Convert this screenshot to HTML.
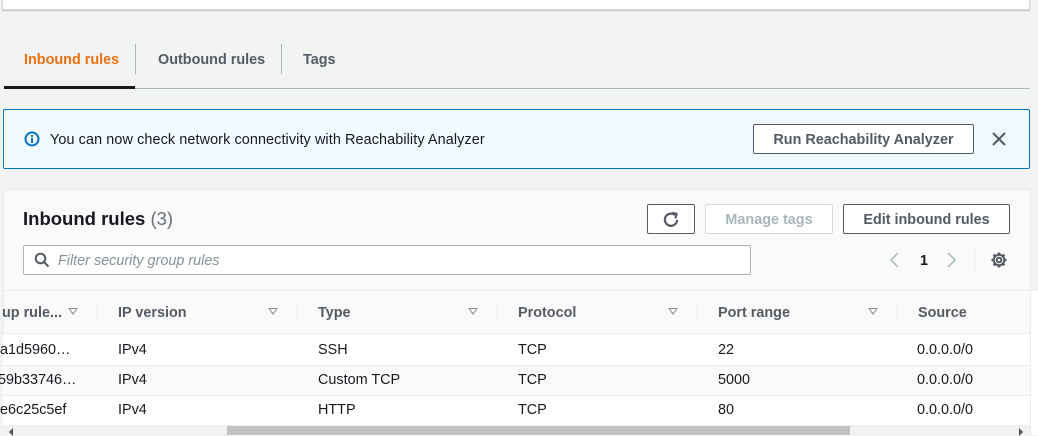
<!DOCTYPE html>
<html><head><style>
*{margin:0;padding:0;box-sizing:border-box}
body{width:1038px;height:435px;overflow:hidden;background:#f2f3f3;font-family:"Liberation Sans",Arial,sans-serif;font-size:14.4px;color:#16191f;position:relative}
.a{position:absolute}
.tab{position:absolute;top:52px;font-weight:bold;font-size:14.4px;color:#545b64}
.btn{position:absolute;border:1px solid #545b64;border-radius:2px;background:#fff;font-weight:bold;color:#545b64;font-size:14.4px;text-align:center}
.th{position:absolute;top:305px;font-weight:bold;color:#545b64}
.tri{position:absolute;top:308px;width:0;height:0;border-left:5px solid transparent;border-right:5px solid transparent;border-top:7px solid #879196}
.tri:after{content:"";position:absolute;left:-3px;top:-6px;border-left:3px solid transparent;border-right:3px solid transparent;border-top:4px solid #fff}
.sep{position:absolute;top:301px;width:1px;height:22px;background:#eaeded}
.td{position:absolute;color:#16191f}
</style></head><body>
<div class="a" style="left:2px;top:0;width:1028px;height:10px;background:#fff;border:1px solid #d5dbdb;border-top:none;box-shadow:0 1px 1px rgba(0,0,0,.2)"></div>

<div class="tab" style="left:24px;color:#ec7211">Inbound rules</div>
<div class="a" style="left:135px;top:44px;width:1px;height:30px;background:#aab7b8"></div>
<div class="tab" style="left:158px">Outbound rules</div>
<div class="a" style="left:281px;top:44px;width:1px;height:30px;background:#aab7b8"></div>
<div class="tab" style="left:303px">Tags</div>
<div class="a" style="left:4px;top:88px;width:1026px;height:1px;background:#aab7b8"></div>
<div class="a" style="left:4px;top:86px;width:131px;height:3px;background:#16191f"></div>

<div class="a" style="left:3px;top:109px;width:1027px;height:60px;background:#f1faff;border:1px solid #0073bb;border-radius:2px"></div>
<svg class="a" style="left:24px;top:131px" width="16" height="16" viewBox="0 0 16 16"><circle cx="8" cy="8" r="6.5" fill="none" stroke="#0073bb" stroke-width="2"/><rect x="7" y="7" width="2" height="5" fill="#0073bb"/><rect x="7" y="4" width="2" height="2" fill="#0073bb"/></svg>
<div class="a" style="left:50px;top:132px;color:#16191f;letter-spacing:0.1px">You can now check network connectivity with Reachability Analyzer</div>
<div class="btn" style="left:753px;top:124px;width:221px;height:30px;line-height:30px">Run Reachability Analyzer</div>
<svg class="a" style="left:991px;top:131px" width="16" height="16" viewBox="0 0 16 16"><path d="M2 2L14 14M14 2L2 14" stroke="#545b64" stroke-width="2"/></svg>

<div class="a" style="left:3px;top:189px;width:1028px;height:246px;background:#fafafa;border:1px solid #eaeded"></div>
<div class="a" style="left:23px;top:208px;font-size:18.5px;font-weight:bold">Inbound rules <span style="font-weight:normal;color:#687078">(3)</span></div>
<div class="btn" style="left:647px;top:204px;width:48px;height:30px"><svg style="margin-top:5px" width="20" height="20" viewBox="0 0 18 18"><path d="M14.5 9A5.5 5.5 0 1 1 12.5 4.5" fill="none" stroke="#545b64" stroke-width="2"/><path d="M10 2.5L14 3.5L13 7.5" fill="none" stroke="#545b64" stroke-width="2"/></svg></div>
<div class="btn" style="left:705px;top:204px;width:128px;height:30px;line-height:30px;border-color:#d5dbdb;color:#aab7b8">Manage tags</div>
<div class="btn" style="left:843px;top:204px;width:167px;height:30px;line-height:30px">Edit inbound rules</div>
<div class="a" style="left:23px;top:245px;width:728px;height:30px;background:#fff;border:1px solid #aab7b8;border-radius:2px"></div>
<svg class="a" style="left:34px;top:252px" width="16" height="16" viewBox="0 0 16 16"><circle cx="6.5" cy="6.5" r="4.8" fill="none" stroke="#545b64" stroke-width="2"/><path d="M10 10L14.5 14.5" stroke="#545b64" stroke-width="2"/></svg>
<div class="a" style="left:58px;top:253px;font-style:italic;color:#879196">Filter security group rules</div>
<svg class="a" style="left:888px;top:251px" width="12" height="18" viewBox="0 0 12 18"><path d="M10 2L3 9L10 16" fill="none" stroke="#aab7b8" stroke-width="1.5"/></svg>
<div class="a" style="left:920px;top:253px;font-weight:bold">1</div>
<svg class="a" style="left:946px;top:251px" width="12" height="18" viewBox="0 0 12 18"><path d="M2 2L9 9L2 16" fill="none" stroke="#aab7b8" stroke-width="1.5"/></svg>
<div class="a" style="left:974px;top:245px;width:1px;height:30px;background:#eaeded"></div>
<svg class="a" style="left:990px;top:251px" width="18" height="18" viewBox="0 0 18 18"><circle cx="9" cy="9" r="2.3" fill="none" stroke="#545b64" stroke-width="2"/><circle cx="9" cy="9" r="5.3" fill="none" stroke="#545b64" stroke-width="2"/><g stroke="#545b64" stroke-width="2.6"><path d="M9 1.5V4M9 14V16.5M1.5 9H4M14 9H16.5M3.7 3.7L5.4 5.4M12.6 12.6L14.3 14.3M3.7 14.3L5.4 12.6M12.6 5.4L14.3 3.7"/></g></svg>

<div class="a" style="left:3px;top:290px;width:1028px;height:1px;background:#eaeded"></div>
<div class="a" style="left:1031px;top:291px;width:7px;height:144px;background:#fff"></div>
<div class="th" style="left:2px">up rule...</div><div class="tri" style="left:68px"></div><div class="sep" style="left:97px"></div>
<div class="th" style="left:118px">IP version</div><div class="tri" style="left:268px"></div><div class="sep" style="left:297px"></div>
<div class="th" style="left:318px">Type</div><div class="tri" style="left:468px"></div><div class="sep" style="left:497px"></div>
<div class="th" style="left:518px">Protocol</div><div class="tri" style="left:668px"></div><div class="sep" style="left:697px"></div>
<div class="th" style="left:718px">Port range</div><div class="tri" style="left:868px"></div><div class="sep" style="left:897px"></div>
<div class="th" style="left:918px">Source</div>

<div class="a" style="left:3px;top:333px;width:1027px;height:32px;background:#fff;border-top:1px solid #eaeded"></div>
<div class="a" style="left:3px;top:365px;width:1027px;height:30px;background:#fafafa;border-top:1px solid #eaeded"></div>
<div class="a" style="left:3px;top:395px;width:1027px;height:30px;background:#fff;border-top:1px solid #eaeded"></div>
<div class="td" style="left:0px;top:342px">a1d5960…</div><div class="td" style="left:118px;top:342px">IPv4</div><div class="td" style="left:318px;top:342px">SSH</div><div class="td" style="left:518px;top:342px">TCP</div><div class="td" style="left:718px;top:342px">22</div><div class="td" style="left:917px;top:342px">0.0.0.0/0</div>
<div class="td" style="left:-2px;top:372px">59b33746…</div><div class="td" style="left:118px;top:372px">IPv4</div><div class="td" style="left:318px;top:372px">Custom TCP</div><div class="td" style="left:518px;top:372px">TCP</div><div class="td" style="left:718px;top:372px">5000</div><div class="td" style="left:917px;top:372px">0.0.0.0/0</div>
<div class="td" style="left:0px;top:402px">e6c25c5ef</div><div class="td" style="left:118px;top:402px">IPv4</div><div class="td" style="left:318px;top:402px">HTTP</div><div class="td" style="left:518px;top:402px">TCP</div><div class="td" style="left:718px;top:402px">80</div><div class="td" style="left:917px;top:402px">0.0.0.0/0</div>

<div class="a" style="left:3px;top:425px;width:1027px;height:10px;background:#f1f1f1"></div>
<div class="a" style="left:227px;top:426px;width:623px;height:9px;background:#c1c1c1"></div>
<div class="a" style="left:9px;top:428px;border-top:4px solid transparent;border-bottom:4px solid transparent;border-right:4px solid #505050"></div>
<div class="a" style="left:1019px;top:428px;border-top:4px solid transparent;border-bottom:4px solid transparent;border-left:4px solid #505050"></div>
</body></html>
